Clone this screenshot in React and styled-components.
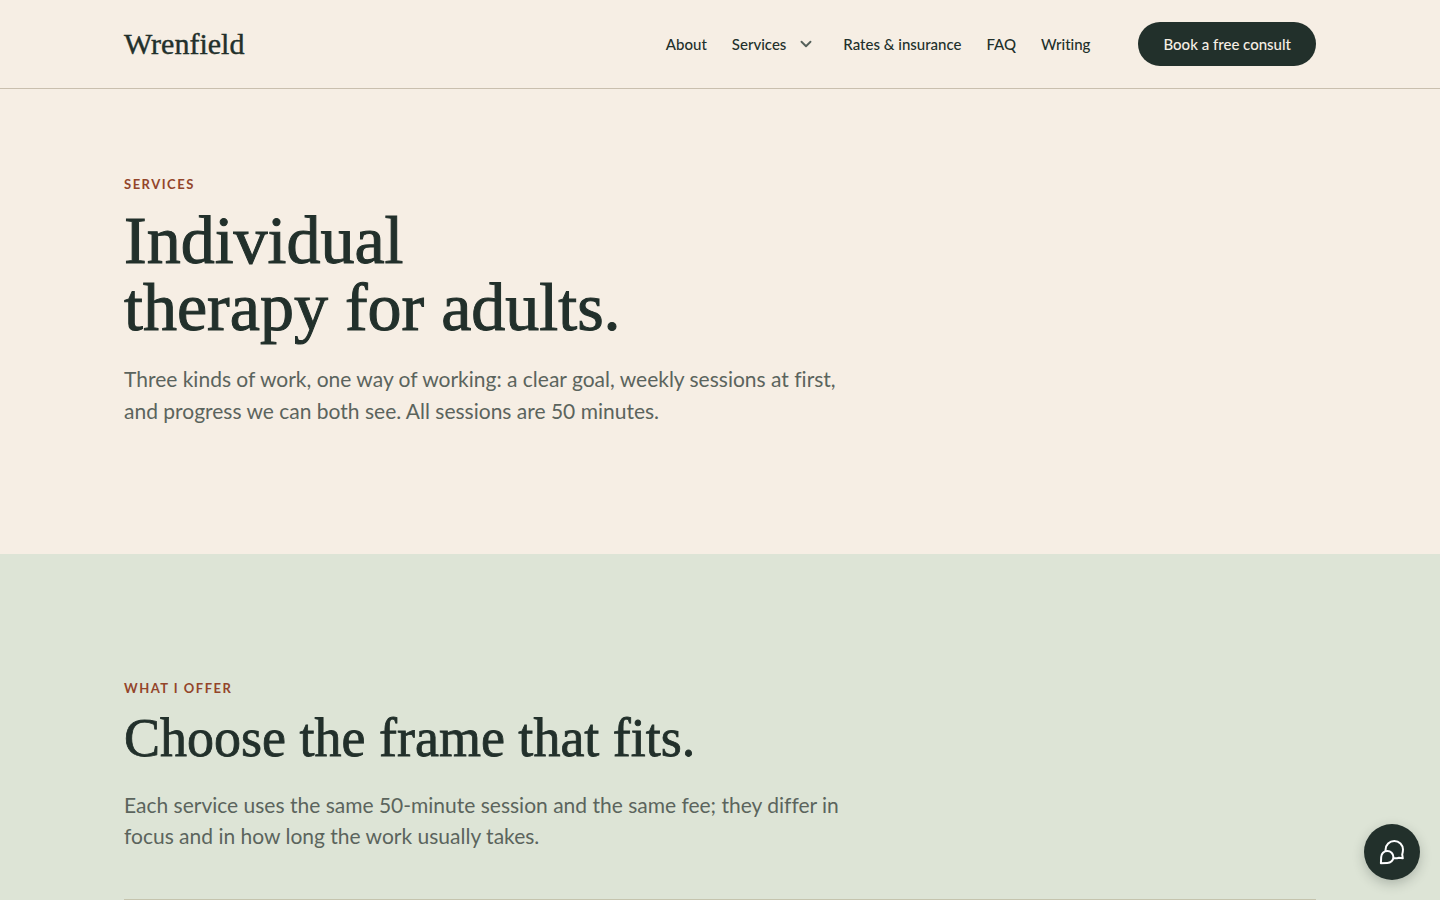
import React from "react";
import styled, { createGlobalStyle } from "styled-components";
import { ChevronDown } from "lucide-react";

const links = [
    { label: "About", href: "#about" },
    { label: "Services", href: "#services", hasMenu: true },
    { label: "Rates & insurance", href: "#rates" },
    { label: "FAQ", href: "#faq" },
    { label: "Writing", href: "#writing" },
];

function Header() {
    return (
        <Bar>
            <BarInner>
                <Logo href="#home">Wrenfield</Logo>
                <Nav aria-label="Main">
                    {links.map((link) => (
                        <NavItem key={link.label}>
                            <NavLink href={link.href}>{link.label}</NavLink>
                            {link.hasMenu && (
                                <MenuToggle aria-label="Show services">
                                    <ChevronDown size={18} strokeWidth={2.5} />
                                </MenuToggle>
                            )}
                        </NavItem>
                    ))}
                </Nav>
                <BookLink href="#book">Book a free consult</BookLink>
            </BarInner>
        </Bar>
    );
}

function ChatIcon() {
    return (
        <svg
            width="32"
            height="32"
            viewBox="0 0 32 32"
            fill="none"
            stroke="currentColor"
            strokeWidth="2"
            strokeLinejoin="round"
            strokeLinecap="round"
            aria-hidden="true"
        >
            <path d="M9.6 14.8V13.6A8.7 8.7 0 0 1 27 13.6C27 15.6 26.6 17 26.2 18.4L26.8 22.3L23 21.8C21.4 22.3 19.8 22.5 18 22.3" />
            <path d="M11.3 14.9A6.1 6.1 0 1 1 11.3 27.1L4.9 27.2L5.2 21A6.1 6.1 0 0 1 11.3 14.9Z" />
        </svg>
    );
}

function App() {
    return (
        <>
            <GlobalStyle />
            <Header />
            <main>
                <Hero>
                    <Container>
                        <Eyebrow>Services</Eyebrow>
                        <Title>
                            Individual
                            <br />
                            therapy for adults.
                        </Title>
                        <Lead>
                            Three kinds of work, one way of working: a clear
                            goal, weekly sessions at first,
                            <br />
                            and progress we can both see. All sessions are 50
                            minutes.
                        </Lead>
                    </Container>
                </Hero>
                <Offer>
                    <Container>
                        <Eyebrow>What I offer</Eyebrow>
                        <Heading>Choose the frame that fits.</Heading>
                        <SectionLead>
                            Each service uses the same 50-minute session and the
                            same fee; they differ in
                            <br />
                            focus and in how long the work usually takes.
                        </SectionLead>
                        <Divider />
                    </Container>
                </Offer>
            </main>
            <ChatButton aria-label="Open chat">
                <ChatIcon />
            </ChatButton>
        </>
    );
}

export default App;

const serif = `"Liberation Serif", serif`;
const sans = `Lato, sans-serif`;

const GlobalStyle = createGlobalStyle`
    * {
        box-sizing: border-box;
    }
    html {
        scrollbar-width: none;
    }
    body {
        margin: 0;
        background: #f6eee4;
        color: #22302b;
        font-family: ${sans};
        font-variant-ligatures: none;
        overflow-x: hidden;
    }
`;

const Container = styled.div`
    max-width: 1240px;
    margin: 0 auto;
    padding: 0 24px;
`;

const Bar = styled.header`
    border-bottom: 1px solid #c9bfae;
`;

const BarInner = styled(Container)`
    height: 88px;
    display: flex;
    align-items: center;
`;

const Logo = styled.a`
    margin-right: auto;
    font-family: ${serif};
    font-size: 30px;
    line-height: 32px;
    color: #22302b;
    text-decoration: none;
    -webkit-text-stroke: 0.4px;
`;

const Nav = styled.nav`
    display: flex;
    gap: 25px;
    margin-right: 48px;
`;

const NavItem = styled.div`
    display: flex;
    align-items: center;
    gap: 8px;
`;

const NavLink = styled.a`
    font-size: 15px;
    font-weight: 500;
    line-height: 24px;
    color: #22302b;
    text-decoration: none;
`;

const MenuToggle = styled.button`
    width: 24px;
    height: 24px;
    padding: 0;
    border: 0;
    display: flex;
    align-items: center;
    justify-content: center;
    background: none;
    color: #55605a;
    cursor: pointer;
`;

const BookLink = styled(NavLink)`
    padding: 10px 25px;
    border-radius: 22px;
    background: #22302b;
    color: #f6eee4;
`;

const Hero = styled.section`
    padding: 85px 0 127px;
`;

const Offer = styled.section`
    padding: 124px 0 96px;
    background: #dde4d6;
`;

const Eyebrow = styled.p`
    margin: 0 0 12px;
    font-size: 13px;
    font-weight: 700;
    line-height: 21px;
    letter-spacing: 1.5px;
    text-transform: uppercase;
    color: #93452a;
`;

const Title = styled.h1`
    margin: 0 0 22px;
    font-family: ${serif};
    font-size: 68px;
    font-weight: 400;
    line-height: 67px;
    -webkit-text-stroke: 1px;
`;

const Heading = styled.h2`
    margin: 0 0 24px;
    font-family: ${serif};
    font-size: 54px;
    font-weight: 400;
    line-height: 54px;
    -webkit-text-stroke: 0.8px;
`;

const Lead = styled.p`
    margin: 0;
    font-size: 21px;
    line-height: 32px;
    color: #5b645d;
`;

const SectionLead = styled(Lead)`
    line-height: 31px;
`;

const Divider = styled.hr`
    margin: 48px 0 0;
    border: 0;
    border-top: 1px solid #c5c4ae;
`;

const ChatButton = styled.button`
    position: fixed;
    right: 20px;
    bottom: 20px;
    width: 56px;
    height: 56px;
    padding: 0;
    border: 0;
    border-radius: 50%;
    display: flex;
    align-items: center;
    justify-content: center;
    background: #22302b;
    color: #fff;
    box-shadow: 0 4px 12px rgba(34, 48, 43, 0.25);
    cursor: pointer;
`;
